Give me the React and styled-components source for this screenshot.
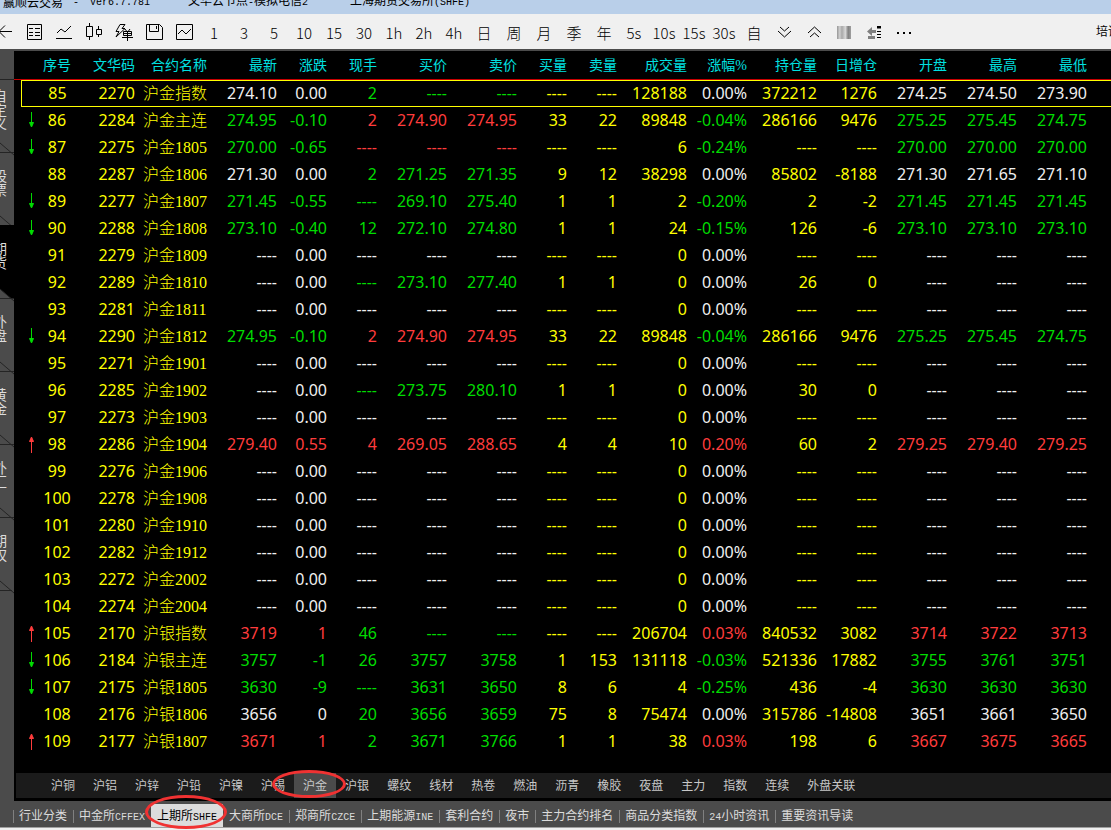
import React, { useState } from 'react';
import styled, { createGlobalStyle } from 'styled-components';

const GlobalStyle = createGlobalStyle`
  * { box-sizing: border-box; }
  body { margin: 0; background: #f0f0f0; overflow: hidden; }
  button { border: 0; padding: 0; background: none; font: inherit; color: inherit; cursor: pointer; white-space: nowrap; }
`;

const COLORS = {
  y: '#ffff00',
  g: '#00dc00',
  r: '#ff3c3c',
  w: '#f0f0f0',
};

// --- layout ---
const Window = styled.div`
  display: flex; flex-direction: column;
  height: 100vh; overflow: hidden;
  font-family: 'Liberation Serif', 'Noto Sans CJK SC', sans-serif;
  font-size: 12px;
`;
const TitleBar = styled.header`
  display: flex; align-items: flex-end; flex: none;
  height: 14px; padding: 0 3px 4px; overflow: hidden;
  background: #b9cfe9; color: #000; line-height: 14px; white-space: pre;
`;
const TitlePart = styled.span`
  flex: none; width: ${p => p.$width}px;
`;
const Latin = styled.span`
  font-family: 'Liberation Mono', monospace; font-size: 10px;
`;
const Toolbar = styled.nav`
  display: flex; align-items: center; flex: none;
  height: 37px; padding-top: 1px; overflow: hidden;
  background: #f0f0f0; border-bottom: 2px solid #4b4b4b; color: #000;
`;
const Tool = styled.button`
  display: flex; align-items: center; justify-content: center; flex: none;
  width: 30px; height: 30px;
  font-family: 'Noto Sans CJK SC', sans-serif; font-size: 15px; font-weight: 300;
  &:first-child { margin-left: -11px; }
  svg { fill: none; stroke: #000; flex: none; }
`;
const Training = styled.button`
  flex: none; margin: 0 -9px 0 auto; line-height: 14px;
`;
const Body = styled.div`
  display: flex; flex: 1; min-height: 0;
  background: #000;
`;
const Side = styled.nav`
  flex: none; width: 14px; padding-top: 28px; overflow: hidden;
  background: #4b4b4b;
`;
const SideTab = styled.button`
  position: relative; display: flex; justify-content: center; align-items: center;
  width: 28px; height: 73px; margin-left: -14px; padding: 0 7px 11px;
  z-index: ${p => (p.$active ? 2 : 'auto')};
  border-top: 1px solid ${p => (p.$active ? '#000' : '#242424')};
  background: ${p => (p.$active ? '#000' : 'transparent')};
  color: #dcdcdc; font-size: 14px; line-height: 14px; white-space: normal;
  word-break: break-all;
  svg { position: absolute; left: 14px; bottom: -4px; z-index: 1; }
`;
const Main = styled.main`
  display: flex; flex-direction: column; flex: 1; min-width: 0;
`;
const QuoteArea = styled.section`
  flex: 1; min-height: 0; overflow: hidden;
`;
const Quotes = styled.table`
  width: 100%; table-layout: fixed; border-collapse: separate; border-spacing: 0;
  font-family: 'Noto Sans', 'Noto Sans CJK SC', sans-serif; font-size: 16px; line-height: 25px;
  white-space: nowrap;
  th, td { padding: 0; text-align: right; }
`;
const HeadRow = styled.tr`
  height: 29px;
  th {
    font-size: 14px; font-weight: 400; line-height: 20px; color: #00e0e0; padding-top: 2px;
    font-family: 'Liberation Serif', 'Noto Sans CJK SC', sans-serif;
    border-bottom: 1px solid #c80000;
  }
  th:nth-child(2) { text-align: center; }
`;
const Row = styled.tr`
  height: 27px;
  td {
    border: 0 solid #ffff00;
    border-width: ${p => (p.$selected ? '1px 0' : '0')};
  }
  td:nth-child(2) { border-left-width: ${p => (p.$selected ? '1px' : '0')}; }
`;
const Cell = styled.td`
  color: ${p => COLORS[p.$color]};
`;
const MarkCell = styled.td`
  && { border: 0; text-align: left; }
`;
const NoCell = styled(Cell)`
  && { text-align: center; }
`;
const NameCell = styled(Cell)`
  && { padding-left: 8px; text-align: left; }
  font-family: 'Liberation Serif', 'Noto Sans CJK SC', sans-serif; font-weight: 300;
`;
const Slot = styled.span`
  float: left; width: 0; height: 25px; padding-top: 13px; line-height: 0;
`;
const Mark = styled.svg`
  position: absolute; margin: -10px 0 0 7px;
  fill: ${p => COLORS[p.$color]}; stroke: ${p => COLORS[p.$color]};
`;
const ProductBar = styled.nav`
  display: flex; flex: none; height: 25px; margin: 0 0 3px 2px; padding-left: 26px;
  background: #1b1b1b; color: #c8c8c8;
`;
const ProductTab = styled.button`
  position: relative; flex: none; padding: 0 9px 2px;
  background: ${p => (p.$active ? '#4b4b4b' : 'transparent')};
`;
const MarketBar = styled.nav`
  display: flex; align-items: stretch; flex: none;
  height: 27px; padding: 3px 0 0 13px; background: #4b4b4b; color: #dcdcdc;
  border-bottom: 1px solid #a0a0a0;
`;
const MarketTab = styled.button`
  position: relative; flex: none; padding: 0 6px 2px;
  background: ${p => (p.$active ? '#dcdcdc' : 'transparent')};
  color: ${p => (p.$active ? '#000' : '#dcdcdc')};
  &::before {
    content: ''; position: absolute; left: 0; top: 6px; height: 13px; width: 1px;
    background: ${p => (p.$line ? '#808080' : 'transparent')};
  }
`;
const StatusStrip = styled.footer`
  flex: none; height: 2px; background: #f0f0f0;
`;
const Ring = styled.span`
  position: absolute; z-index: 2; pointer-events: none;
  left: ${p => p.$left}px; top: ${p => p.$top}px;
  width: ${p => p.$width}px; height: ${p => p.$height}px;
  border: 3px solid #f03232; border-radius: 50%;
`;

// --- data ---
const columns = [
  ['', 7], ['序号', 72], ['文华码', 42], ['合约名称', 72], ['最新', 70], ['涨跌', 50], ['现手', 50],
  ['买价', 70], ['卖价', 70], ['买量', 50], ['卖量', 50], ['成交量', 70], ['涨幅%', 60],
  ['持仓量', 70], ['日增仓', 60], ['开盘', 70], ['最高', 70], ['最低', 70],
];

// no, code, name, 14 values from 最新 to 最低 ("-" is an empty quote), colour of each value
const rows = [
  ['85 2270 沪金指数 274.10 0.00 2 - - - - 128188 0.00% 372212 1276 274.25 274.50 273.90', 'wwgggyyywyywww'],
  ['86 2284 沪金主连 274.95 -0.10 2 274.90 274.95 33 22 89848 -0.04% 286166 9476 275.25 275.45 274.75', 'ggrrryyygyyggg', 'g'],
  ['87 2275 沪金1805 270.00 -0.65 - - - - - 6 -0.24% - - 270.00 270.00 270.00', 'ggrrryyygyyggg', 'g'],
  ['88 2287 沪金1806 271.30 0.00 2 271.25 271.35 9 12 38298 0.00% 85802 -8188 271.30 271.65 271.10', 'wwgggyyywyywww'],
  ['89 2277 沪金1807 271.45 -0.55 - 269.10 275.40 1 1 2 -0.20% 2 -2 271.45 271.45 271.45', 'gggggyyygyyggg', 'g'],
  ['90 2288 沪金1808 273.10 -0.40 12 272.10 274.80 1 1 24 -0.15% 126 -6 273.10 273.10 273.10', 'gggggyyygyyggg', 'g'],
  ['91 2279 沪金1809 - 0.00 - - - - - 0 0.00% - - - - -', 'wwwwwyyywyywww'],
  ['92 2289 沪金1810 - 0.00 - 273.10 277.40 1 1 0 0.00% 26 0 - - -', 'wwgggyyywyywww'],
  ['93 2281 沪金1811 - 0.00 - - - - - 0 0.00% - - - - -', 'wwwwwyyywyywww'],
  ['94 2290 沪金1812 274.95 -0.10 2 274.90 274.95 33 22 89848 -0.04% 286166 9476 275.25 275.45 274.75', 'ggrrryyygyyggg', 'g'],
  ['95 2271 沪金1901 - 0.00 - - - - - 0 0.00% - - - - -', 'wwwwwyyywyywww'],
  ['96 2285 沪金1902 - 0.00 - 273.75 280.10 1 1 0 0.00% 30 0 - - -', 'wwgggyyywyywww'],
  ['97 2273 沪金1903 - 0.00 - - - - - 0 0.00% - - - - -', 'wwwwwyyywyywww'],
  ['98 2286 沪金1904 279.40 0.55 4 269.05 288.65 4 4 10 0.20% 60 2 279.25 279.40 279.25', 'rrrrryyyryyrrr', 'r'],
  ['99 2276 沪金1906 - 0.00 - - - - - 0 0.00% - - - - -', 'wwwwwyyywyywww'],
  ['100 2278 沪金1908 - 0.00 - - - - - 0 0.00% - - - - -', 'wwwwwyyywyywww'],
  ['101 2280 沪金1910 - 0.00 - - - - - 0 0.00% - - - - -', 'wwwwwyyywyywww'],
  ['102 2282 沪金1912 - 0.00 - - - - - 0 0.00% - - - - -', 'wwwwwyyywyywww'],
  ['103 2272 沪金2002 - 0.00 - - - - - 0 0.00% - - - - -', 'wwwwwyyywyywww'],
  ['104 2274 沪金2004 - 0.00 - - - - - 0 0.00% - - - - -', 'wwwwwyyywyywww'],
  ['105 2170 沪银指数 3719 1 46 - - - - 206704 0.03% 840532 3082 3714 3722 3713', 'rrgggyyyryyrrr', 'r'],
  ['106 2184 沪银主连 3757 -1 26 3757 3758 1 153 131118 -0.03% 521336 17882 3755 3761 3751', 'gggggyyygyyggg', 'g'],
  ['107 2175 沪银1805 3630 -9 - 3631 3650 8 6 4 -0.25% 436 -4 3630 3630 3630', 'gggggyyygyyggg', 'g'],
  ['108 2176 沪银1806 3656 0 20 3656 3659 75 8 75474 0.00% 315786 -14808 3651 3661 3650', 'wwgggyyywyywww'],
  ['109 2177 沪银1807 3671 1 2 3671 3766 1 1 38 0.03% 198 6 3667 3675 3665', 'rrgggyyyryyrrr', 'r'],
];

const sideTabs = ['自定义', '股票', '期货', '外盘', '黄金', '外汇', '期权'];
const products = ['沪铜', '沪铝', '沪锌', '沪铅', '沪镍', '沪锡', '沪金', '沪银', '螺纹', '线材', '热卷', '燃油', '沥青', '橡胶', '夜盘', '主力', '指数', '连续', '外盘关联'];
const markets = ['行业分类', '中金所CFFEX', '上期所SHFE', '大商所DCE', '郑商所CZCE', '上期能源INE', '套利合约', '夜市', '主力合约排名', '商品分类指数', '24小时资讯', '重要资讯导读'];
const periods = ['1', '3', '5', '10', '15', '30', '1h', '2h', '4h', '日', '周', '月', '季', '年', '5s', '10s', '15s', '30s', '自'];

// --- toolbar icons ---
const Icon = ({ children }) => (
  <svg width="20" height="20" viewBox="0 0 20 20" aria-hidden="true">{children}</svg>
);
const BackIcon = () => <Icon><path d="M5 9.5H18M11 3.5L5 9.5L11 15.5" /></Icon>;
const ListIcon = () => (
  <Icon><path d="M3.5 2.5H17.5V17.5H3.5ZM5 6.5H9M5 10.5H9M5 13.5H9M11 6.5H16M11 10.5H16M11 13.5H16" /></Icon>
);
const LineIcon = () => <Icon><path d="M2 16.5H18M3 11L7 7L11 10L17 4" /></Icon>;
const CandleIcon = () => (
  <Icon><path d="M5.5 1V4M5.5 14V18M2.5 4.5H8.5V14.5H2.5ZM14.5 4V7M14.5 12V15M12.5 7.5H17.5V12.5H12.5Z" /></Icon>
);
const FlashIcon = () => (
  <Icon>
    <path d="M6 2.5H11L8 6.5H11L2 15L5 9.5H2Z" />
    <path d="M11 7L12.5 9M16 7L14.5 9M9.5 9.5H17.5V13.5H9.5ZM9.5 11.5H17.5M8 15.5H19M13.5 9V19" />
  </Icon>
);
const SaveIcon = () => <Icon><path d="M2.5 2.5H15.5L18.5 5.5V17.5H2.5ZM5.5 3V9.5H14.5V3M12.5 4V7" /></Icon>;
const ChartIcon = () => <Icon><path d="M2.5 2.5H18.5V17.5H2.5ZM4 12L8 8L12 12L17 7" /></Icon>;
const DownIcon = () => <Icon><path d="M6 5L10.5 9L15 5M4 9L10.5 15L17 9" /></Icon>;
const UpIcon = () => <Icon><path d="M4 11L10.5 5L17 11M6 15L10.5 11L15 15" /></Icon>;
const ShadeIcon = () => (
  <Icon>
    <defs>
      <linearGradient id="shade">
        <stop offset="0" stopColor="#969696" /><stop offset="0.2" stopColor="#d0d0d0" />
        <stop offset="0.35" stopColor="#a8a8a8" /><stop offset="0.6" stopColor="#d8d8d8" />
        <stop offset="0.8" stopColor="#808080" /><stop offset="1" stopColor="#a0a0a0" />
      </linearGradient>
    </defs>
    <rect x="3" y="4" width="14" height="13" fill="url(#shade)" stroke="none" />
  </Icon>
);
const DepthIcon = () => (
  <Icon>
    <path d="M3 9.5L8 5V8H12V11H8V14ZM4 14H11V17H4Z" fill="#808080" stroke="none" />
    <path d="M13 6H17M13 9.5H17M13 12.5H17M13 15.5H17" />
    <path d="M13 5H17" strokeWidth="2" />
  </Icon>
);
const MoreIcon = () => <Icon><path d="M3 11H5M9 11H11M15 11H17" strokeWidth="2" /></Icon>;

const leftTools = [
  ['返回', BackIcon], ['报价', ListIcon], ['分时图', LineIcon], ['K线图', CandleIcon],
  ['闪电下单', FlashIcon], ['保存', SaveIcon], ['画面', ChartIcon],
];
const rightTools = [
  ['缩小', DownIcon], ['放大', UpIcon], ['配色', ShadeIcon], ['盘口', DepthIcon], ['更多', MoreIcon],
];

const mixed = text =>
  text.split(/([\x21-\x7e]+)/).map((part, i) => (i % 2 ? <Latin key={i}>{part}</Latin> : part));

const Arrow = ({ color }) => (
  <Slot>
    <Mark $color={color} width="7" height="18" viewBox="0 0 7 18" aria-hidden="true">
      {color === 'g'
        ? <><path d="M3.5 1V12" /><path d="M1.5 11.5H5.5L3.5 16Z" /></>
        : <><path d="M3.5 6V18" /><path d="M1.5 6.5H5.5L3.5 2Z" /></>}
    </Mark>
  </Slot>
);

const QuoteRow = ({ row, selected, onSelect }) => {
  const [no, code, name, ...values] = row[0].split(' ');
  return (
    <Row $selected={selected} onClick={onSelect}>
      <MarkCell />
      <NoCell $color="y">{row[2] && <Arrow color={row[2]} />}{no}</NoCell>
      <Cell $color="y">{code}</Cell>
      <NameCell $color="y">{name}</NameCell>
      {values.map((value, i) => (
        <Cell key={i} $color={row[1][i]}>{value === '-' ? '----' : value}</Cell>
      ))}
      <td />
    </Row>
  );
};

const App = () => {
  const [side, setSide] = useState('期货');
  const [product, setProduct] = useState('沪金');
  const [market, setMarket] = useState('上期所SHFE');
  const [selected, setSelected] = useState(0);
  const active = markets.indexOf(market);

  return (
    <Window>
      <GlobalStyle />
      <TitleBar>
        <TitlePart $width={70}>赢顺云交易</TitlePart>
        <TitlePart $width={17}><Latin>-</Latin></TitlePart>
        <TitlePart $width={98}><Latin>Ver6.7.781</Latin></TitlePart>
        <TitlePart $width={162}>{mixed('文华云节点-模拟电信2')}</TitlePart>
        <TitlePart $width={130}>{mixed('上海期货交易所(SHFE)')}</TitlePart>
      </TitleBar>
      <Toolbar>
        {leftTools.map(([label, Glyph]) => <Tool key={label} aria-label={label}><Glyph /></Tool>)}
        {periods.map(period => <Tool key={period}>{period}</Tool>)}
        {rightTools.map(([label, Glyph]) => <Tool key={label} aria-label={label}><Glyph /></Tool>)}
        <Training>培训</Training>
      </Toolbar>
      <Body>
        <Side>
          {sideTabs.map(tab => (
            <SideTab key={tab} $active={tab === side} onClick={() => setSide(tab)}>
              {tab}
              <svg width="14" height="14" viewBox="0 0 14 14" aria-hidden="true">
                <path d="M0 1L14 13V14H0Z" fill="#4b4b4b" />
                <path d="M0 1L14 13M0 10.5H12" stroke="#242424" />
              </svg>
            </SideTab>
          ))}
        </Side>
        <Main>
          <QuoteArea>
            <Quotes>
              <colgroup>
                {columns.map(([label, width]) => <col key={label} style={{ width }} />)}
                <col />
              </colgroup>
              <thead>
                <HeadRow>
                  {columns.map(([label]) => <th key={label}>{label}</th>)}
                  <th />
                </HeadRow>
              </thead>
              <tbody>
                {rows.map((row, i) => (
                  <QuoteRow key={row[0]} row={row} selected={i === selected} onSelect={() => setSelected(i)} />
                ))}
              </tbody>
            </Quotes>
          </QuoteArea>
          <ProductBar>
            {products.map(item => (
              <ProductTab key={item} $active={item === product} onClick={() => setProduct(item)}>
                {item}
                {item === product && <Ring $left={-22} $top={-3} $width={74} $height={28} />}
              </ProductTab>
            ))}
          </ProductBar>
        </Main>
      </Body>
      <MarketBar>
        {markets.map((item, i) => (
          <MarketTab
            key={item}
            $active={i === active}
            $line={i !== active && i !== active + 1}
            onClick={() => setMarket(item)}
          >
            {mixed(item)}
            {i === active && <Ring $left={-6} $top={-9} $width={82} $height={34} />}
          </MarketTab>
        ))}
      </MarketBar>
      <StatusStrip />
    </Window>
  );
};

export default App;
